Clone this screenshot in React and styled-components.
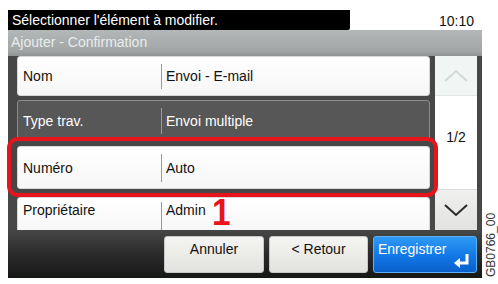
import React from 'react'
import styled, { createGlobalStyle } from 'styled-components'

const GlobalStyle = createGlobalStyle`
  html, body {
    margin: 0;
    padding: 0;
    background: #ffffff;
  }
  body {
    font-family: "Liberation Sans", Arial, sans-serif;
  }
`

const Screen = styled.div`
  position: relative;
  width: 498px;
  height: 284px;
  overflow: hidden;
  background: #ffffff;
  padding-top: 10px;
  box-sizing: border-box;
`

const TopBar = styled.div`
  display: flex;
  align-items: stretch;
  height: 20px;
  margin-left: 8px;
  width: 474px;
`

const Message = styled.div`
  width: 342px;
  background: #000;
  color: #fff;
  font-size: 14px;
  line-height: 20px;
  padding-left: 4px;
  box-sizing: border-box;
  border-bottom-right-radius: 2px;
`

const Clock = styled.div`
  flex: 1;
  text-align: right;
  padding-right: 8px;
  font-size: 14px;
  line-height: 22px;
  color: #111;
`

const Frame = styled.div`
  margin-left: 8px;
  width: 474px;
  display: flex;
  flex-direction: column;
`

const Header = styled.div`
  height: 26px;
  background: linear-gradient(#b3b7b7, #a2a6a6 80%, #8f9393);
  color: #e9ecec;
  font-size: 14px;
  line-height: 24px;
  padding-left: 3px;
`

const Body = styled.div`
  display: flex;
  height: 174px;
  background: #474747;
`

const List = styled.div`
  width: 413px;
  margin-left: 9px;
  display: flex;
  flex-direction: column;
  overflow: hidden;
`

const Row = styled.div`
  flex: none;
  display: flex;
  align-items: ${p => (p.$top ? 'flex-start' : 'center')};
  padding-top: ${p => (p.$top ? '4px' : '0')};
  height: ${p => p.$h}px;
  margin-top: ${p => p.$gap}px;
  box-sizing: border-box;
  border-radius: 3px;
  font-size: 14px;
  background: ${p => (p.$dark ? '#575757' : 'linear-gradient(#ffffff, #f6f6f6)')};
  color: ${p => (p.$dark ? '#ffffff' : '#111111')};
  border: 1px solid ${p => (p.$dark ? '#8c8c8c' : '#d8d8d8')};
`

const Label = styled.div`
  width: 143px;
  padding-left: 5px;
  box-sizing: border-box;
`

const Divider = styled.div`
  width: 1px;
  align-self: stretch;
  margin: ${p => (p.$top ? '0 0 6px' : '7px 0 6px')};
  background: #9a9a9a;
`

const Value = styled.div`
  padding-left: 4px;
`

const Scroll = styled.div`
  width: 42px;
  margin-left: 5px;
  display: flex;
  flex-direction: column;
  background: #ffffff;
`

const ScrollButton = styled.div`
  height: ${p => p.$h}px;
  display: flex;
  align-items: center;
  justify-content: center;
  background: ${p => (p.$disabled ? '#f1f5f3' : 'linear-gradient(#f0f0ee, #e2e2e0)')};
  border-bottom: ${p => (p.$disabled ? '1px solid #e4e6e5' : 'none')};
`

const Pager = styled.div`
  flex: 1;
  display: flex;
  align-items: center;
  justify-content: center;
  padding-bottom: 12px;
  font-size: 14px;
  color: #111;
  border-bottom: 1px solid #dcdcdc;
`

const Footer = styled.div`
  height: 48px;
  display: flex;
  align-items: flex-start;
  justify-content: flex-end;
  gap: 5px;
  padding: 6px 5px 0 0;
  box-sizing: border-box;
  background: linear-gradient(#474747, #2a2a2a 50%, #161816);
`

const Button = styled.div`
  position: relative;
  width: ${p => p.$w}px;
  height: 37px;
  box-sizing: border-box;
  border-radius: 3px;
  font-size: 14px;
  padding-top: 4px;
  text-align: ${p => (p.$primary ? 'left' : 'center')};
  padding-left: ${p => (p.$primary ? '4px' : '0')};
  color: ${p => (p.$primary ? '#ffffff' : '#111111')};
  background: ${p =>
    p.$primary
      ? 'linear-gradient(#2f9af5, #1277e6 55%, #0a5fc9)'
      : 'linear-gradient(#f4f4f2, #e2e2df)'};
  border: 1px solid ${p => (p.$primary ? '#5fb0f5' : '#c8c8c4')};
`

const EnterIcon = styled.svg`
  position: absolute;
  right: 5px;
  bottom: 3px;
`

const Highlight = styled.div`
  position: absolute;
  left: 7px;
  top: 137px;
  width: 431px;
  height: 60px;
  box-sizing: border-box;
  border: 4px solid #e8141c;
  border-radius: 11px;
  pointer-events: none;
`

const Callout = styled.div`
  position: absolute;
  left: 211px;
  top: 193px;
  font-size: 37px;
  line-height: 40px;
  font-weight: bold;
  color: #e8141c;
  transform: scaleX(0.9);
  font-family: "Liberation Sans", Arial, sans-serif;
`

const Reference = styled.div`
  position: absolute;
  left: 484px;
  top: 277px;
  transform: rotate(-90deg);
  transform-origin: left top;
  font-size: 12px;
  color: #333;
  white-space: nowrap;
`

const rows = [
  { label: 'Nom', value: 'Envoi - E-mail', h: 40, gap: 0 },
  { label: 'Type trav.', value: 'Envoi multiple', h: 41, gap: 4, dark: true },
  { label: 'Numéro', value: 'Auto', h: 43, gap: 5 },
  { label: 'Propriétaire', value: 'Admin', h: 40, gap: 8, top: true },
]

export default function App() {
  return (
    <>
      <GlobalStyle />
      <Screen>
        <TopBar>
          <Message>Sélectionner l'élément à modifier.</Message>
          <Clock>10:10</Clock>
        </TopBar>
        <Frame>
          <Header>Ajouter - Confirmation</Header>
          <Body>
            <List>
              {rows.map(r => (
                <Row key={r.label} $h={r.h} $gap={r.gap} $dark={r.dark} $top={r.top}>
                  <Label>{r.label}</Label>
                  <Divider $top={r.top} />
                  <Value>{r.value}</Value>
                </Row>
              ))}
            </List>
            <Scroll>
              <ScrollButton $h={39} $disabled>
                <svg width="26" height="14" viewBox="0 0 26 14">
                  <polyline points="2,12 13,2 24,12" fill="none" stroke="#d3dad6" strokeWidth="2" />
                </svg>
              </ScrollButton>
              <Pager>1/2</Pager>
              <ScrollButton $h={40}>
                <svg width="26" height="14" viewBox="0 0 26 14">
                  <polyline points="2,2 13,12 24,2" fill="none" stroke="#2a2a2a" strokeWidth="2" />
                </svg>
              </ScrollButton>
            </Scroll>
          </Body>
          <Footer>
            <Button $w={100}>Annuler</Button>
            <Button $w={99}>&lt; Retour</Button>
            <Button $w={104} $primary>
              Enregistrer
              <EnterIcon width="18" height="16" viewBox="0 0 18 16">
                <polyline points="14,1 14,10 4,10" fill="none" stroke="#fff" strokeWidth="3" />
                <polygon points="1,10 7,5 7,15" fill="#fff" />
              </EnterIcon>
            </Button>
          </Footer>
        </Frame>
        <Highlight />
        <Callout>1</Callout>
        <Reference>GB0766_00</Reference>
      </Screen>
    </>
  )
}
